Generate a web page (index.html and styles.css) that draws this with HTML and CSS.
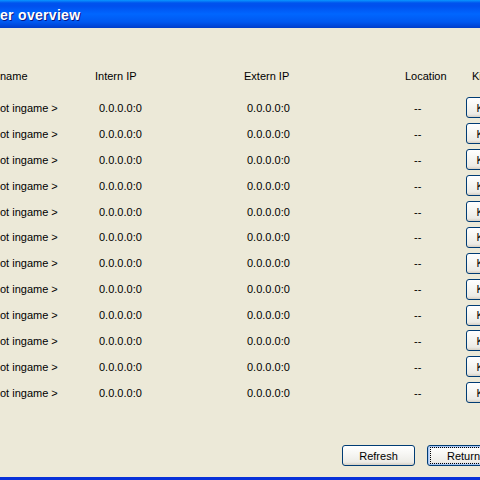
FILE: index.html
```html
<!DOCTYPE html>
<html>
<head>
<meta charset="utf-8">
<link rel="stylesheet" href="styles.css">
</head>
<body>
<div class="window">
  <div class="titlebar"><span class="title">er overview</span></div>
  <div class="content">
    <div class="grid">
      <div class="hd c1">name</div>
      <div class="hd c2">Intern IP</div>
      <div class="hd c3">Extern IP</div>
      <div class="hd c4">Location</div>
      <div class="hd c5">Kick</div>

      <div class="cell c1">ot ingame &gt;</div><div class="cell c2">0.0.0.0:0</div><div class="cell c3">0.0.0.0:0</div><div class="cell c4">--</div><div class="cell c5"><button class="btn kick">Kick</button></div>
      <div class="cell c1">ot ingame &gt;</div><div class="cell c2">0.0.0.0:0</div><div class="cell c3">0.0.0.0:0</div><div class="cell c4">--</div><div class="cell c5"><button class="btn kick">Kick</button></div>
      <div class="cell c1">ot ingame &gt;</div><div class="cell c2">0.0.0.0:0</div><div class="cell c3">0.0.0.0:0</div><div class="cell c4">--</div><div class="cell c5"><button class="btn kick">Kick</button></div>
      <div class="cell c1">ot ingame &gt;</div><div class="cell c2">0.0.0.0:0</div><div class="cell c3">0.0.0.0:0</div><div class="cell c4">--</div><div class="cell c5"><button class="btn kick">Kick</button></div>
      <div class="cell c1">ot ingame &gt;</div><div class="cell c2">0.0.0.0:0</div><div class="cell c3">0.0.0.0:0</div><div class="cell c4">--</div><div class="cell c5"><button class="btn kick">Kick</button></div>
      <div class="cell c1">ot ingame &gt;</div><div class="cell c2">0.0.0.0:0</div><div class="cell c3">0.0.0.0:0</div><div class="cell c4">--</div><div class="cell c5"><button class="btn kick">Kick</button></div>
      <div class="cell c1">ot ingame &gt;</div><div class="cell c2">0.0.0.0:0</div><div class="cell c3">0.0.0.0:0</div><div class="cell c4">--</div><div class="cell c5"><button class="btn kick">Kick</button></div>
      <div class="cell c1">ot ingame &gt;</div><div class="cell c2">0.0.0.0:0</div><div class="cell c3">0.0.0.0:0</div><div class="cell c4">--</div><div class="cell c5"><button class="btn kick">Kick</button></div>
      <div class="cell c1">ot ingame &gt;</div><div class="cell c2">0.0.0.0:0</div><div class="cell c3">0.0.0.0:0</div><div class="cell c4">--</div><div class="cell c5"><button class="btn kick">Kick</button></div>
      <div class="cell c1">ot ingame &gt;</div><div class="cell c2">0.0.0.0:0</div><div class="cell c3">0.0.0.0:0</div><div class="cell c4">--</div><div class="cell c5"><button class="btn kick">Kick</button></div>
      <div class="cell c1">ot ingame &gt;</div><div class="cell c2">0.0.0.0:0</div><div class="cell c3">0.0.0.0:0</div><div class="cell c4">--</div><div class="cell c5"><button class="btn kick">Kick</button></div>
      <div class="cell c1">ot ingame &gt;</div><div class="cell c2">0.0.0.0:0</div><div class="cell c3">0.0.0.0:0</div><div class="cell c4">--</div><div class="cell c5"><button class="btn kick">Kick</button></div>
    </div>
  </div>
  <div class="footer">
    <button class="btn wide">Refresh</button>
    <button class="btn wide default"><span class="focus">Return</span></button>
  </div>
</div>
</body>
</html>
```
FILE: styles.css
```css
html, body {
  margin: 0;
  padding: 0;
  width: 480px;
  height: 480px;
  overflow: hidden;
  background: #ECE9D8;
}

.window {
  width: 508px;
  height: 480px;
  display: flex;
  flex-direction: column;
  background: #ECE9D8;
  font-family: Tahoma, "Liberation Sans", Arial, sans-serif;
  font-size: 11px;
  color: #000;
  box-sizing: border-box;
  border-bottom: 3px solid #0831D9;
}

.titlebar {
  height: 28px;
  flex: none;
  display: flex;
  align-items: center;
  background: linear-gradient(to bottom,
    #0997FF 0px, #0053EE 3px, #0050EE 6px, #0066FF 14px,
    #0058F0 22px, #0046D8 26px, #003DC8 28px);
  box-sizing: border-box;
  padding-top: 1px;
}

.title {
  color: #fff;
  font-weight: bold;
  font-size: 14px;
  text-shadow: 1px 1px 0 #0A1883;
  letter-spacing: 0.3px;
}

.content {
  flex: 1;
  padding-top: 38px;
}

.grid {
  display: grid;
  grid-template-columns: 95px 149px 161px 61px 42px;
  grid-template-rows: 29px;
  grid-auto-rows: 25.9px;
}

.hd {
  display: flex;
  align-items: center;
  align-self: start;
  height: 20px;
  white-space: nowrap;
}

.hd.c5 { padding-left: 6px; }

.cell {
  display: flex;
  align-items: center;
  white-space: nowrap;
}

.cell.c2 { padding-left: 4px; }
.cell.c3 { padding-left: 3px; }
.cell.c4 { padding-left: 9px; }

.btn {
  font-family: Tahoma, "Liberation Sans", Arial, sans-serif;
  font-size: 11px;
  color: #000;
  height: 21px;
  box-sizing: border-box;
  border: 1px solid #003C74;
  border-radius: 3px;
  background: linear-gradient(to bottom, #FFFFFF 0%, #F7F7F4 40%, #ECEBE6 85%, #D6D0C5 100%);
  padding: 0;
  margin: 0;
  display: flex;
  align-items: center;
  justify-content: center;
}

.kick {
  width: 45px;
}

.footer {
  flex: none;
  display: flex;
  justify-content: flex-end;
  gap: 12px;
  padding: 0 8px 11px 0;
}

.wide {
  width: 73px;
}

.default {
  box-shadow: inset 0 0 0 1px #A6C6F3, inset 0 0 0 2px #CEDEF7;
}

.focus {
  display: flex;
  align-items: center;
  justify-content: center;
  width: 65px;
  height: 15px;
  outline: 1px dotted #000;
}
```
